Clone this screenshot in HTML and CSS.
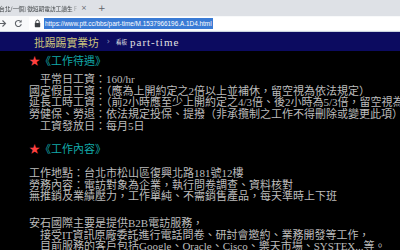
FILE: index.html
```html
<!DOCTYPE html>
<html lang="zh-Hant">
<head>
  <meta charset="UTF-8" />
  <title>[台北/一個] 徵短期電訪工讀生 F - 看板 part-time - 批踢踢實業坊</title>
  <link rel="stylesheet" href="styles.css">
</head>
<body>
  <div class="tabstrip">
    <div class="tab">
      <span class="tab-title">台北/一個] 徵短期電訪工讀生 F</span>
      <span class="tab-close">×</span>
    </div>
    <span class="tab-new">+</span>
  </div>

  <div class="toolbar">
    <svg class="icon fwd" width="9" height="9" viewBox="0 0 9 9">
      <path d="M0 4.5 H7.5 M4.5 1.5 L7.5 4.5 L4.5 7.5" fill="none" stroke="#5f6368" stroke-width="1.1" />
    </svg>
    <svg class="icon reload" width="9" height="9" viewBox="0 0 9 9">
      <path d="M7.3 5.2 A3 3 0 1 1 6.6 2.4" fill="none" stroke="#5f6368" stroke-width="1.1" />
      <path d="M7.6 0.8 V3.4 H5 Z" fill="#5f6368" />
    </svg>
    <div class="omnibox">
      <svg class="icon lock" width="7" height="9" viewBox="0 0 7 9">
        <path d="M1.8 4 V2.8 A1.7 1.7 0 0 1 5.2 2.8 V4" fill="none" stroke="#3c4043" stroke-width="1" />
        <rect x="0.8" y="4" width="5.4" height="4.2" rx="0.6" fill="#3c4043" />
      </svg>
      <span class="url">https://www.ptt.cc/bbs/part-time/M.1537966196.A.1D4.html</span>
    </div>
  </div>

  <div id="topbar">
    <span class="logo">批踢踢實業坊</span>
    <span class="sep">›</span>
    <span class="board-label">看板</span>
    <span class="board">part-time</span>
  </div>

  <div id="main-content">
    <div class="line"><span class="f-red">★</span><span class="f-cyan">《工作待遇》</span></div>
    <div class="spacer-s"></div>
    <div class="line">　平常日工資：160/hr</div>
    <div class="line">國定假日工資：（應為上開約定之2倍以上並補休，留空視為依法規定）</div>
    <div class="line">延長工時工資：（前2小時應至少上開約定之4/3倍、後2小時為5/3倍，留空視為依法規定）</div>
    <div class="line">勞健保、勞退：依法規定投保、提撥（非承攬制之工作不得刪除或變更此項）</div>
    <div class="line">　工資發放日：每月5日</div>
    <div class="line"></div>
    <div class="line"><span class="f-red">★</span><span class="f-cyan">《工作內容》</span></div>
    <div class="line"></div>
    <div class="line">工作地點：台北市松山區復興北路181號12樓</div>
    <div class="line">勞務內容：電訪對象為企業，執行問卷調查、資料核對</div>
    <div class="line">無推銷及業績壓力，工作單純、不需銷售產品，每天準時上下班</div>
    <div class="spacer-l"></div>
    <div class="line">安石國際主要是提供B2B電訪服務，</div>
    <div class="line">　接受IT資訊原廠委託進行電話問卷、研討會邀約、業務開發等工作，</div>
    <div class="line">　目前服務的客戶包括Google、Oracle、Cisco、樂天市場、SYSTEX...等。</div>
  </div>
</body>
</html>
```

FILE: styles.css
```css
html,
body {
  margin: 0;
  padding: 0;
  overflow: hidden;
}

body {
  width: 400px;
  height: 250px;
  background: #000;
  font-family: "Noto Sans CJK TC", sans-serif;
}

/* browser chrome */
.tabstrip {
  height: 16px;
  background: #dee1e6;
  display: flex;
  align-items: center;
}

.tab {
  display: flex;
  align-items: center;
  width: 95px;
  height: 16px;
}

.tab-title {
  width: 80px;
  margin-left: -1px;
  font-size: 5.7px;
  color: #3c4043;
  white-space: nowrap;
  overflow: hidden;
  -webkit-mask-image: linear-gradient(to right, #000 88%, transparent);
}

.tab-close {
  margin-left: 2px;
  font-family: "DejaVu Sans", sans-serif;
  font-size: 7px;
  color: #5f6368;
}

.tab-new {
  margin-left: 3px;
  font-family: "DejaVu Sans", sans-serif;
  font-size: 9px;
  color: #5f6368;
}

.toolbar {
  height: 15px;
  background: #f8f9fa;
  border-bottom: 1px solid #c9d2df;
  display: flex;
  align-items: center;
}

.icon {
  display: block;
}

.fwd {
  margin-left: -2px;
}

.reload {
  margin-left: 7px;
}

.omnibox {
  flex: 1;
  height: 13px;
  margin-left: 6px;
  background: #fff;
  display: flex;
  align-items: center;
  padding-left: 5px;
}

.url {
  margin-left: 3px;
  padding: 1px 1px;
  background: #3a7bd5;
  color: #fff;
  font-family: "Liberation Sans", sans-serif;
  font-size: 6.4px;
  line-height: 9px;
  white-space: nowrap;
}

/* ptt top bar */
#topbar {
  height: 19px;
  background: #0c0b60;
  display: flex;
  align-items: center;
  padding-left: 34px;
}

.logo {
  font-size: 10.8px;
  color: #cdc67c;
}

.sep {
  margin-left: 8px;
  font-family: "DejaVu Sans", sans-serif;
  font-size: 8px;
  color: #8f93b8;
}

.board-label {
  margin-left: 6px;
  font-size: 5.5px;
  color: #e6e6e6;
}

.board {
  margin-left: 3px;
  font-family: "Liberation Serif", serif;
  font-size: 11px;
  letter-spacing: 1px;
  color: #e0e0e0;
}

/* article body */
#main-content {
  padding: 5px 0 0 29px;
  font-family: "Liberation Serif", "Noto Sans CJK TC", serif;
  font-size: 11px;
  color: #bcbcbc;
}

.line {
  height: 11.75px;
  line-height: 11.75px;
  white-space: pre;
}

.spacer-s {
  height: 6px;
}

.spacer-l {
  height: 14.75px;
}

.f-red {
  color: #ff4040;
}

.f-cyan {
  color: #12a9a9;
}
```
